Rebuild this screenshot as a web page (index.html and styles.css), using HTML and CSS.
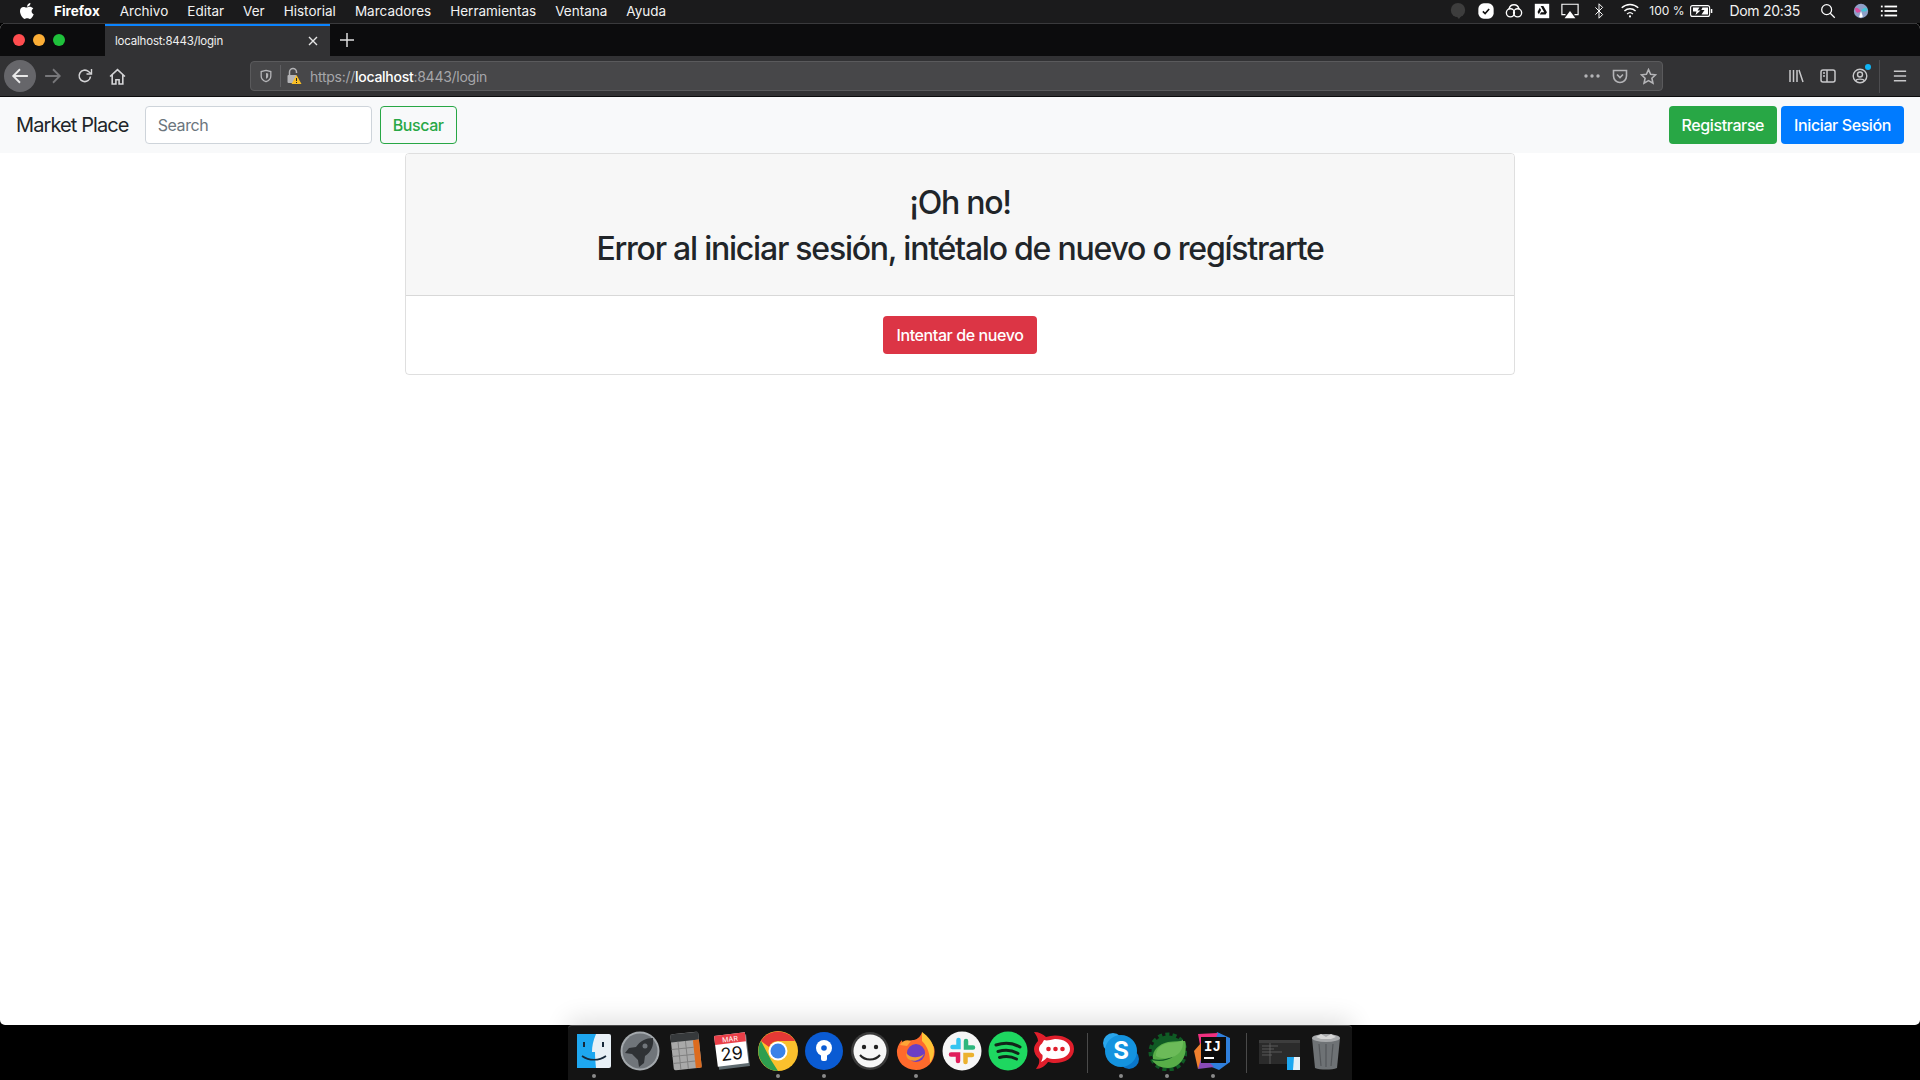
FILE: index.html
```html
<!DOCTYPE html>
<html lang="es">

<head>
    <meta charset="UTF-8">
    <title>Market Place</title>
    <link rel="stylesheet" href="styles.css">
</head>

<body>
    <!-- mac menu bar -->
    <header class="menubar">
        <div class="menu-left">
            <svg class="apple" viewBox="0 0 14 16" width="14" height="16"><path fill="#fff" d="M10.400 0c.1 1-.3 1.900-.9 2.600-.6.700-1.500 1.200-2.400 1.100-.1-.9.300-1.900.9-2.500C8.600.5 9.600.1 10.400 0zM13.300 5.500c-1 .6-1.700 1.600-1.700 2.800 0 1.400.8 2.500 2.100 3-.3.800-.7 1.600-1.200 2.400-.8 1.100-1.500 2.200-2.600 2.200s-1.400-.7-2.700-.7-1.700.7-2.700.7c-1.100 0-1.900-1.200-2.700-2.300C.7 11.900 0 9.800 0 8c0-2.600 1.700-4.100 3.500-4.100 1.100 0 2 .7 2.800.7.700 0 1.700-.8 3-.8 1.600 0 3 .6 4 1.700z"/></svg>
            <b>Firefox</b>
            <span>Archivo</span>
            <span>Editar</span>
            <span>Ver</span>
            <span>Historial</span>
            <span>Marcadores</span>
            <span>Herramientas</span>
            <span>Ventana</span>
            <span>Ayuda</span>
        </div>
        <div class="menu-right">
            <svg class="tray" viewBox="0 0 20 20"><circle cx="10" cy="9" r="8" fill="#3d3d3d"/><path fill="#3d3d3d" d="M8 15h6l-3 4z"/></svg>
            <svg class="tray" viewBox="0 0 20 20"><rect x="1.500" y="1.500" width="17" height="17" rx="6" fill="#fff"/><path d="M6.500 10.500l2.500 2.300 4.500-5" fill="none" stroke="#111" stroke-width="1.800"/></svg>
            <svg class="tray" viewBox="0 0 20 20" fill="none" stroke="#fff" stroke-width="1.500"><circle cx="6" cy="12" r="4.500"/><circle cx="14" cy="12" r="4.500"/><path d="M4.500 8c.5-3 3-5 5.500-5s5 2 5.500 5"/></svg>
            <svg class="tray" viewBox="0 0 20 20"><rect x="2" y="2" width="16" height="16" fill="#fff"/><path d="M8.500 4.500h3l4 7h-3zM7.500 6.500L9 9l-2.500 4.500-1.500-2.500zM7.500 14l1.500-2.500h6.500L14 14z" fill="#111"/></svg>
            <svg class="tray tray-wide" viewBox="0 0 20 20" fill="none"><path d="M5 14H1V2.500h18V14H15" stroke="#fff" stroke-width="1.300"/><path d="M10 10l6 8H4z" fill="#fff"/></svg>
            <svg class="tray" viewBox="0 0 20 20" fill="none" stroke="#fff" stroke-width="1.100"><path d="M6 6l8 8-4 4V2l4 4-8 8"/></svg>
            <svg class="tray tray-wifi" viewBox="0 0 20 20" fill="none" stroke="#fff" stroke-width="1.500"><path d="M.8 6.500c5.400-5 13-5 18.400 0M3.800 10c3.500-3.300 8.900-3.300 12.400 0M6.800 13.300c1.800-1.700 4.600-1.700 6.400 0"/><circle cx="10" cy="16" r="1.200" fill="#fff" stroke="none"/></svg>
            <span class="battery-text">100 %</span>
            <svg class="battery" viewBox="0 0 23 12" width="23" height="12"><rect x=".6" y=".6" width="19" height="10.800" rx="2" fill="none" stroke="#fff" stroke-width="1.100"/><rect x="20.800" y="4" width="1.500" height="4" fill="#fff"/><path d="M3 2.500h6.500L7.500 5.500h3L5.500 10l1-3.500H3zM12.500 2.500H18v7h-6.500l3-4.500h-3.200z" fill="#fff"/></svg>
            <span class="clock">Dom 20:35</span>
            <svg class="tray" viewBox="0 0 20 20" fill="none" stroke="#fff" stroke-width="1.400"><circle cx="8.500" cy="8.500" r="5.500"/><path d="M12.500 12.500l5 5"/></svg>
            <svg class="tray siri" viewBox="0 0 20 20"><circle cx="10" cy="10" r="8" fill="#8f9fc8"/><path d="M3 7c3-2 5 1 7 3-2 2-5 3-6 0z" fill="#d94fa0"/><path d="M10 10c2-3 5-5 7-2 0 3-4 3-7 2z" fill="#43c6d8"/><path d="M10 10l2 6c-2 2-4 1-4 0z" fill="#fff"/></svg>
            <svg class="tray" viewBox="0 0 20 20" fill="#fff"><rect x="1" y="4" width="2" height="2"/><rect x="5" y="4" width="14" height="2"/><rect x="1" y="9" width="2" height="2"/><rect x="5" y="9" width="14" height="2"/><rect x="1" y="14" width="2" height="2"/><rect x="5" y="14" width="14" height="2"/></svg>
        </div>
    </header>

    <div class="window">
        <!-- firefox chrome -->
        <div class="tabbar">
            <div class="lights">
                <i class="light red"></i>
                <i class="light yellow"></i>
                <i class="light green"></i>
            </div>
            <div class="tab">
                <span>localhost:8443/login</span>
                <svg viewBox="0 0 12 12" width="12" height="12" stroke="#e6e6e6" stroke-width="1.400"><path d="M2 2l8 8M10 2l-8 8"/></svg>
            </div>
            <svg class="newtab" viewBox="0 0 14 14" width="14" height="14" stroke="#ddd" stroke-width="1.500"><path d="M7 0v14M0 7h14"/></svg>
        </div>

        <div class="toolbar">
            <span class="tool back">
                <svg viewBox="0 0 16 16" width="18" height="18" fill="none" stroke="#e8e8e8" stroke-width="1.700"><path d="M15 8H2M8 2L2 8l6 6"/></svg>
            </span>
            <span class="tool">
                <svg viewBox="0 0 16 16" width="18" height="18" fill="none" stroke="#77777a" stroke-width="1.600"><path d="M1 8h13M8 2l6 6-6 6"/></svg>
            </span>
            <span class="tool">
                <svg viewBox="0 0 16 16" width="16" height="16" fill="none" stroke="#d4d4d6" stroke-width="1.600"><path d="M13.500 8.500A5.700 5.700 0 1 1 11.500 3.500L14 5.500"/><path d="M14.500 1v5h-5" stroke-width="1.400"/></svg>
            </span>
            <span class="tool">
                <svg viewBox="0 0 16 16" width="17" height="17" fill="none" stroke="#d4d4d6" stroke-width="1.500"><path d="M1 8l7-6.500L15 8M3 6.500V15h3.500v-4h3v4H13V6.500"/></svg>
            </span>
            <div class="urlbar">
                <svg class="shield" viewBox="0 0 16 16" width="14" height="16" fill="none" stroke="#b4b4b7" stroke-width="1.500"><path d="M8 1.500l5.500 1.500v5c0 3-2.500 5.500-5.500 6.500C5 13.500 2.500 11 2.500 8V3z"/><path d="M8 4.500l2.500.7V8c0 1.500-1 2.600-2.500 3.300z" fill="#b4b4b7" stroke="none"/></svg>
                <i class="url-sep"></i>
                <svg class="lock" viewBox="0 0 16 18" width="16" height="18"><path d="M3.500 8V5a3.500 3.500 0 0 1 7 0v1" fill="none" stroke="#b4b4b7" stroke-width="1.500"/><rect x="1.500" y="8" width="9" height="8" rx="1" fill="#b4b4b7"/><path d="M10.500 8l5 9h-10z" fill="#fbbf24"/><rect x="10" y="11" width="1" height="3" fill="#222"/><rect x="10" y="15" width="1" height="1" fill="#222"/></svg>
                <span class="url"><span class="url-dim">https://</span><b>localhost</b><span class="url-dim">:8443/login</span></span>
                <svg class="url-icon dots" viewBox="0 0 16 4" width="16" height="4" fill="#b4b4b7"><circle cx="2" cy="2" r="1.700"/><circle cx="8" cy="2" r="1.700"/><circle cx="14" cy="2" r="1.700"/></svg>
                <svg class="url-icon" viewBox="0 0 16 16" width="16" height="16" fill="none" stroke="#b4b4b7" stroke-width="1.600"><path d="M1.500 2.500h13v5.500a6.500 6.500 0 0 1-13 0z"/><path d="M5 6.500l3 3 3-3"/></svg>
                <svg class="url-icon" viewBox="0 0 16 16" width="17" height="17" fill="none" stroke="#b4b4b7" stroke-width="1.500"><path d="M8 1.500l2 4.400 4.700.5-3.500 3.200 1 4.700L8 11.900l-4.200 2.400 1-4.700L1.300 6.400 6 5.900z"/></svg>
            </div>
            <div class="tools-right">
                <span class="tool">
                    <svg viewBox="0 0 16 16" width="16" height="16" fill="none" stroke="#c8c8ca" stroke-width="1.500"><path d="M2 2v12M5.500 2v12M9 2v12M11 2l4 12"/></svg>
                </span>
                <span class="tool">
                    <svg viewBox="0 0 16 16" width="16" height="16" fill="none" stroke="#c8c8ca" stroke-width="1.500"><rect x="1" y="2" width="14" height="12" rx="2"/><path d="M7 2v12M3 5h2M3 8h2"/></svg>
                </span>
                <span class="tool account">
                    <svg viewBox="0 0 16 16" width="16" height="16" fill="none" stroke="#c8c8ca" stroke-width="1.400"><circle cx="8" cy="8" r="6.800"/><circle cx="8" cy="6.500" r="2.500"/><path d="M3.500 13c1-2.500 8-2.500 9 0"/></svg>
                    <i class="sync-dot"></i>
                </span>
                <i class="tool-sep"></i>
                <span class="tool">
                    <svg viewBox="0 0 16 16" width="14" height="14" stroke="#c8c8ca" stroke-width="1.600"><path d="M1 2.500h14M1 8h14M1 13.500h14"/></svg>
                </span>
            </div>
        </div>

        <!-- page -->
        <nav class="navbar">
            <a class="brand">Market Place</a>
            <form class="search">
                <input type="text" class="form-control" placeholder="Search">
                <button type="button" class="btn btn-outline-success">Buscar</button>
            </form>
            <div class="nav-actions">
                <a class="btn btn-success">Registrarse</a>
                <a class="btn btn-primary">Iniciar Sesión</a>
            </div>
        </nav>

        <main class="container">
            <div class="card">
                <div class="card-header">
                    <h2>¡Oh no!</h2>
                    <h2>Error al iniciar sesión, intétalo de nuevo o regístrarte</h2>
                </div>
                <div class="card-body">
                    <a class="btn btn-danger">Intentar de nuevo</a>
                </div>
            </div>
        </main>
    </div>

    <!-- dock -->
    <footer class="dock">
        <div class="dock-item running">
            <svg viewBox="0 0 40 40"><rect x="3" y="3" width="34" height="34" rx="2" fill="#e8f0f6"/><path d="M3 3h19c-3 7-4 12-4 18h3c0 5 .5 11 1 16H3z" fill="#1ea7f0"/><path d="M10 11v5M29 11v5" stroke="#16283a" stroke-width="2"/><path d="M8 25c7 5 17 5 24 0" fill="none" stroke="#16283a" stroke-width="1.600"/></svg>
        </div>
        <div class="dock-item">
            <svg viewBox="0 0 40 40"><circle cx="20" cy="20" r="19.500" fill="#a4a9ad"/><circle cx="20" cy="20" r="17.500" fill="#70757a"/><path d="M33 7c-7 0-13 3-17 9l-7 1-4 5 7 1 6 6 1 7 5-4 1-7c6-4 9-10 8-18z" fill="#2f3235"/><circle cx="25" cy="15" r="2.500" fill="#70757a"/></svg>
        </div>
        <div class="dock-item">
            <svg viewBox="0 0 40 40"><g transform="rotate(-6 20 20)"><rect x="6" y="2" width="28" height="36" rx="2" fill="#a9a9a9"/><rect x="6" y="2" width="28" height="8" fill="#36393b"/><rect x="28" y="10" width="6" height="28" fill="#dd6b1e"/><path d="M6 17h22M6 24h22M6 31h22M13 10v28M20.500 10v28" stroke="#808080"/></g></svg>
        </div>
        <div class="dock-item">
            <svg viewBox="0 0 40 40"><g transform="rotate(-7 20 20)"><rect x="5" y="5" width="31" height="32" fill="#5f6b70"/><rect x="4" y="3" width="31" height="31" fill="#fff"/><rect x="4" y="3" width="31" height="9" fill="#ea3f48"/><text x="19.500" y="10.500" class="cal-month">MAR</text><text x="19.500" y="29" class="cal-day">29</text></g></svg>
        </div>
        <div class="dock-item running">
            <svg viewBox="0 0 40 40"><circle cx="20" cy="20" r="20" fill="#fbc02d"/><path d="M3 10a20 20 0 0 1 34 0H20a10 10 0 0 0-9 6z" fill="#e53935"/><path d="M3 10l10 19 7 11A20 20 0 0 1 3 10z" fill="#2e9e4f"/><circle cx="20" cy="20" r="9.500" fill="#fff"/><circle cx="20" cy="20" r="7.500" fill="#3b82e8"/></svg>
        </div>
        <div class="dock-item running">
            <svg viewBox="0 0 40 40"><circle cx="20" cy="20" r="19" fill="#0a5bd3"/><circle cx="20" cy="17" r="8" fill="#fff"/><rect x="17" y="17" width="6" height="13" rx="2" fill="#fff"/><circle cx="20" cy="17" r="2.800" fill="#0a5bd3"/></svg>
        </div>
        <div class="dock-item">
            <svg viewBox="0 0 40 40"><circle cx="20" cy="20" r="19" fill="#3a3a3a"/><circle cx="20" cy="20" r="16.500" fill="#f6f6f6"/><circle cx="14" cy="16" r="2.200" fill="#222"/><circle cx="26" cy="16" r="2.200" fill="#222"/><path d="M10 24c5 6 15 6 20 0" fill="none" stroke="#222" stroke-width="2"/></svg>
        </div>
        <div class="dock-item running">
            <svg viewBox="0 0 40 40"><path d="M26 1c1 5 8 7 12 15 3 11-5 23-18 23C8 39 0 30 1 19c1-5 3-8 5-10 0 3 1 4 3 5 2-4 6-5 9-5 4-1 7-4 8-8z" fill="#ff6a2c"/><path d="M26 1c6 4 12 11 12 19 0 5-2 9-4 12 0-9-2-16-8-22z" fill="#ffc436"/><path d="M4 14c2-4 7-6 11-4l-4 5z" fill="#ffa436"/><circle cx="20" cy="22" r="9" fill="#6b3fc4"/><path d="M10 22c4 5 12 6 18 1-3 6-9 8-14 6-3-1-4-4-4-7z" fill="#f0a030"/></svg>
        </div>
        <div class="dock-item">
            <svg viewBox="0 0 40 40"><circle cx="20" cy="20" r="19.500" fill="#f6f6f6"/><path d="M16.500 9v7h-6" stroke="#36c5f0" stroke-width="4.500" fill="none" stroke-linecap="round"/><path d="M31 16.500h-7V10" stroke="#2eb67d" stroke-width="4.500" fill="none" stroke-linecap="round"/><path d="M23.500 31v-7H30" stroke="#ecb22e" stroke-width="4.500" fill="none" stroke-linecap="round"/><path d="M9 23.500h7V30" stroke="#e01e5a" stroke-width="4.500" fill="none" stroke-linecap="round"/></svg>
        </div>
        <div class="dock-item">
            <svg viewBox="0 0 40 40"><circle cx="20" cy="20" r="19.500" fill="#1ed760"/><path d="M8 14c8-2.500 17-2 24 2M10 20.500c7-2 14-1.500 20 2M11.500 26.500c6-1.500 12-1 17 1.500" fill="none" stroke="#12241a" stroke-width="3" stroke-linecap="round"/></svg>
        </div>
        <div class="dock-item">
            <svg viewBox="0 0 40 40"><path d="M0 1c5 0 9 2 12 5 3-1 6-1.500 9-1.500C31 4.500 40 9 40 18s-9 14-19 14c-2 0-5-.5-7-1-3 4-7 7-12 7 2-3 4-6 3-10-3-3-5-6-5-10 0-3 2-6 4-8C4 7 2 4 0 1z" fill="#e01e2b"/><path d="M21 8c9 0 15 4 15 10s-6 10-15 10c-3 0-6-.5-8-1.500-2 2-4 4-6 4.500 1-2 2-4 1.500-7C6 22 5 20 5 18c0-2 1-4 3-5.500L10 9c3 1 6 0 11-1z" fill="#fff"/><circle cx="14.500" cy="18" r="2.300" fill="#e01e2b"/><circle cx="21.500" cy="18" r="2.300" fill="#e01e2b"/><circle cx="28.500" cy="18" r="2.300" fill="#e01e2b"/></svg>
        </div>
        <i class="dock-sep"></i>
        <div class="dock-item running">
            <svg viewBox="0 0 40 40"><circle cx="12" cy="12" r="10" fill="#2aa6ec"/><circle cx="28" cy="28" r="10" fill="#0a76c9"/><circle cx="20" cy="20" r="16" fill="#1493df"/><text x="20" y="28" class="skype-s">S</text></svg>
        </div>
        <div class="dock-item running">
            <svg viewBox="0 0 40 40"><circle cx="21" cy="21" r="17" fill="none" stroke="#0f5a24" stroke-width="5" stroke-dasharray="4 3"/><circle cx="21" cy="21" r="16.500" fill="#0f5a24"/><path d="M38 10c1 1 1 10 0 13-2 8-9 14-17 14-7 0-13-3-16-8 7 2 16 1 22-4-6 3-15 5-21 3-1-9 6-15 15-17 7-1 13-1 17-1z" fill="#58ad48"/><path d="M36 9c1 10-5 17-15 18-6 .5-10-.5-12-2-.5-7 5-12 13-13 6-1 11-1 14-3z" fill="#6cbb59"/></svg>
        </div>
        <div class="dock-item running">
            <svg viewBox="0 0 40 40"><path d="M24 1l13 6v24l-11 8-12-5z" fill="#2f7fdc"/><path d="M5 3l20-1-5 12H7z" fill="#f0307f"/><path d="M1 20l7-8 3 17-6 9z" fill="#f0802e"/><path d="M5 38l4-14 12 12z" fill="#8a4bb8"/><rect x="8" y="6" width="25" height="26" fill="#0c0c0c"/><text x="11" y="20" class="ij-text">IJ</text><rect x="11" y="26" width="10" height="2" fill="#fff"/></svg>
        </div>
        <i class="dock-sep"></i>
        <div class="dock-item dock-wide">
            <svg viewBox="0 0 42 40"><rect x="0" y="9" width="41" height="24" fill="#2b2b2b"/><rect x="0" y="9" width="41" height="3" fill="#3d3d3d"/><path d="M3 15h16M3 18h12M3 21h20M3 24h10M11 12v21" stroke="#666" stroke-width=".8"/><rect x="28" y="26" width="13" height="13" fill="#e8f0f6"/><path d="M28 26h7l-1 13h-6z" fill="#1ea7f0"/></svg>
        </div>
        <div class="dock-item">
            <svg viewBox="0 0 40 40"><path d="M6 7h28l-3 30c-5 2-17 2-22 0z" fill="#6e7275"/><ellipse cx="20" cy="7" rx="14" ry="4" fill="#a8aaac"/><path d="M10 6l5-3 5 3 5-3 5 3-5 2h-10z" fill="#d6d6d6"/><path d="M13 13l2 22M20 13v23M27 13l-2 22" stroke="#54575a" stroke-width="1.200"/></svg>
        </div>
    </footer>
</body>

</html>
```

FILE: styles.css
```css
* {
    margin: 0;
    padding: 0;
    box-sizing: border-box;
}

body {
    width: 1920px;
    height: 1080px;
    overflow: hidden;
    display: flex;
    flex-direction: column;
    background: #000;
    font-family: Inter, "Liberation Sans", sans-serif;
}

/* menu bar */
.menubar {
    height: 23px;
    display: flex;
    justify-content: space-between;
    align-items: center;
    padding-bottom: 2px;
    background: #1b1b1c;
    color: #f2f2f2;
    font-size: 13.5px;
}

.menu-left {
    display: flex;
    align-items: center;
    gap: 19px;
    padding-left: 20px;
}

.menu-left b {
    font-weight: 700;
    color: #fff;
    margin-left: 1px;
    margin-right: 1px;
}

.menu-right {
    display: flex;
    align-items: center;
    padding-right: 22px;
}

.tray {
    width: 18px;
    height: 18px;
    margin-left: 10px;
}

.tray-wide {
    width: 20px;
    margin-left: 9px;
}

.tray-wifi {
    width: 20px;
    margin-left: 12px;
}

.battery-text {
    margin-left: 9px;
    font-size: 12px;
}

.battery {
    margin-left: 6px;
}

.clock {
    margin-left: 16px;
    margin-right: 9px;
    font-size: 14px;
    letter-spacing: -.3px;
}

.siri {
    margin-left: 15px;
}

/* browser window */
.window {
    flex: 1;
    display: flex;
    flex-direction: column;
    background: #fff;
    border-radius: 6px 6px 5px 5px;
    overflow: hidden;
}

.tabbar {
    height: 33px;
    display: flex;
    align-items: center;
    background: #0c0c0d;
    border-top: 1px solid #3a3a3c;
}

.lights {
    width: 105px;
    display: flex;
    gap: 8px;
    padding-left: 13px;
}

.light {
    width: 12px;
    height: 12px;
    border-radius: 50%;
}

.red { background: #ff4d4f; }
.yellow { background: #fcae36; }
.green { background: #1fc13b; }

.tab {
    width: 225px;
    height: 32px;
    display: flex;
    justify-content: space-between;
    align-items: center;
    padding: 0 11px 0 10px;
    background: #323234;
    border-top: 2px solid #0a84ff;
    color: #f0f0f0;
    font-size: 11.5px;
    letter-spacing: -.2px;
}

.newtab {
    margin-left: 10px;
}

.toolbar {
    height: 41px;
    display: flex;
    align-items: center;
    background: #323234;
    border-bottom: 1px solid #0c0c0d;
    padding-left: 4px;
}

.tool {
    width: 32px;
    height: 32px;
    display: flex;
    justify-content: center;
    align-items: center;
    position: relative;
}

.back {
    border-radius: 50%;
    background: #66666a;
    margin-right: 1px;
}

.urlbar {
    width: 1413px;
    height: 30px;
    margin-left: 117px;
    display: flex;
    align-items: center;
    padding-left: 8px;
    background: #474749;
    border: 1px solid #5a5a5c;
    border-radius: 4px;
    color: #fff;
    font-size: 14px;
    letter-spacing: -.27px;
}

.url-sep {
    width: 1px;
    height: 22px;
    margin: 0 5px 0 7px;
    background: #5f5f62;
}

.url {
    margin-left: 8px;
    flex: 1;
}

.url b {
    font-weight: 500;
}

.url-dim {
    color: #a6a6a9;
}

.url-icon {
    margin-right: 12px;
}

.url-icon:last-child {
    margin-right: 5px;
}

.tools-right {
    display: flex;
    align-items: center;
    margin-left: auto;
    padding-right: 4px;
}

.sync-dot {
    position: absolute;
    top: 4px;
    right: 5px;
    width: 6px;
    height: 6px;
    border-radius: 50%;
    background: #0fb4f5;
}

.tool-sep {
    width: 1px;
    height: 33px;
    margin: 0 4px 0 3px;
    background: #4c4c4f;
}

/* page */
.navbar {
    height: 56px;
    display: flex;
    align-items: center;
    padding: 0 16px;
    background: #f8f9fa;
}

.brand {
    font-size: 20px;
    letter-spacing: -.9px;
    color: #212529;
    margin-right: 16px;
}

.search {
    display: flex;
    gap: 8px;
}

.form-control {
    width: 227px;
    height: 38px;
    padding: 6px 12px;
    border: 1px solid #ced4da;
    border-radius: 4px;
    font-family: inherit;
    font-size: 16px;
    letter-spacing: -.4px;
    color: #495057;
    background: #fff;
}

.form-control::placeholder {
    color: #6c757d;
}

.btn {
    display: inline-block;
    height: 38px;
    padding: 6px 12px;
    border: 1px solid transparent;
    border-radius: 4px;
    font-family: inherit;
    font-size: 16px;
    font-weight: 500;
    letter-spacing: -.4px;
    line-height: 24px;
    white-space: nowrap;
    color: #fff;
}

.btn-outline-success {
    color: #28a745;
    border-color: #28a745;
    background: transparent;
}

.btn-success { background: #28a745; }
.btn-primary { background: #007bff; }
.btn-danger { background: #dc3545; }

.nav-actions {
    display: flex;
    gap: 4px;
    margin-left: auto;
}

.container {
    width: 1110px;
    margin: 0 auto;
}

.card {
    border: 1px solid rgba(0, 0, 0, .125);
    border-radius: 4px;
    overflow: hidden;
    text-align: center;
}

.card-header {
    padding: 30px 20px 18px;
    background: #f7f7f7;
    border-bottom: 1px solid rgba(0, 0, 0, .125);
}

.card-header h2 {
    font-size: 32px;
    font-weight: 525;
    letter-spacing: -1.23px;
    line-height: 38.4px;
    margin-bottom: 8px;
    color: #212529;
}

.card-body {
    padding: 20px;
}

/* dock */
.dock {
    width: 784px;
    height: 55px;
    margin: 0 auto;
    display: flex;
    align-items: flex-start;
    padding: 0 3px;
    background: #141414;
    border-top: 1px solid #4a4a4a;
    border-radius: 4px 4px 0 0;
    box-shadow: 0 -6px 24px rgba(0, 0, 0, .12);
}

.dock-item {
    width: 46px;
    height: 54px;
    display: flex;
    flex-direction: column;
    align-items: center;
    padding-top: 5px;
}

.dock-item svg {
    width: 40px;
    height: 40px;
}

.dock-wide svg {
    width: 42px;
}

.running::after {
    content: "";
    width: 4px;
    height: 4px;
    margin-top: 3px;
    border-radius: 50%;
    background: #8a8a8a;
}

.dock-sep {
    width: 1px;
    height: 40px;
    margin: 7px 10px 0;
    background: #4a4a4a;
}

.cal-month {
    font: 7px Inter, sans-serif;
    fill: #fff;
    text-anchor: middle;
}

.cal-day {
    font: 18px Inter, sans-serif;
    fill: #111;
    text-anchor: middle;
}

.skype-s {
    font: 700 24px Inter, sans-serif;
    fill: #fff;
    text-anchor: middle;
}

.ij-text {
    font: 700 14px "Liberation Mono", monospace;
    fill: #fff;
}
```
